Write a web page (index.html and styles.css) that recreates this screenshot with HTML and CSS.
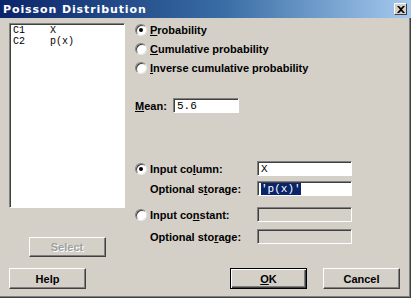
FILE: index.html
```html
<!DOCTYPE html>
<html lang="en">
<head>
	<meta charset="UTF-8">
	<title>Poisson Distribution</title>
	<link rel="stylesheet" href="styles.css">
</head>
<body>
	<div class="dialog">
		<div class="titlebar">
			<span class="title">Poisson Distribution</span>
			<span class="close">
				<svg width="8" height="7" viewBox="0 0 8 7"><path d="M0 0h2l2 2 2-2h2L5 3.5 8 7H6L4 5 2 7H0l3-3.5z" fill="#000"/></svg>
			</span>
		</div>
		<div class="content">
			<div class="left">
				<div class="list">
					<div class="list-row"><span>C1</span><span>X</span></div>
					<div class="list-row"><span>C2</span><span>p(x)</span></div>
				</div>
				<button class="btn btn-select" disabled>Select</button>
			</div>
			<div class="right">
				<div class="radio-row"><span class="radio on"></span><span class="label"><u>P</u>robability</span></div>
				<div class="radio-row"><span class="radio"></span><span class="label"><u>C</u>umulative probability</span></div>
				<div class="radio-row"><span class="radio"></span><span class="label"><u>I</u>nverse cumulative probability</span></div>

				<div class="field-row row-mean">
					<span class="label label-mean"><u>M</u>ean:</span>
					<span class="field field-mean">5.6</span>
				</div>

				<div class="field-row row-col">
					<span class="radio on"></span>
					<span class="label label-wide">Input co<u>l</u>umn:</span>
					<span class="field">X</span>
				</div>
				<div class="field-row row-store">
					<span class="label label-indent">Optional s<u>t</u>orage:</span>
					<span class="field"><span class="sel">'p(x)'</span></span>
				</div>
				<div class="field-row row-const">
					<span class="radio"></span>
					<span class="label label-wide">Input co<u>n</u>stant:</span>
					<span class="field off"></span>
				</div>
				<div class="field-row row-store2">
					<span class="label label-indent">Optional sto<u>r</u>age:</span>
					<span class="field off"></span>
				</div>
			</div>
		</div>
		<div class="footer">
			<button class="btn">Help</button>
			<button class="btn btn-default"><u>O</u>K</button>
			<button class="btn btn-cancel">Cancel</button>
		</div>
	</div>
</body>
</html>
```

FILE: styles.css
```css
*{
	margin: 0;
	padding: 0;
	box-sizing: border-box;
}
body{
	background: #d4d0c8;
	font-family: "Liberation Sans", Arial, sans-serif;
	font-size: 11px;
	color: #000;
}
u{
	text-decoration: underline;
	text-underline-offset: 1px;
}
.dialog{
	width: 411px;
	height: 298px;
	background: #d4d0c8;
	box-shadow: inset -1px -1px #404040, inset -2px -2px #808080;
}
.titlebar{
	display: flex;
	align-items: center;
	height: 18px;
	padding: 0 4px 0 3px;
	background: linear-gradient(to right, #0a246a, #3a6ea5 55%, #a6caf0);
	color: #fff;
	font-family: "DejaVu Sans", Verdana, sans-serif;
	font-weight: bold;
	font-size: 11px;
	letter-spacing: 0.9px;
}
.title{
	flex: 1;
}
.close{
	display: flex;
	align-items: center;
	justify-content: center;
	width: 13px;
	height: 12px;
	background: #d4d0c8;
	border: 1px solid;
	border-color: #fff #404040 #404040 #fff;
}
.content{
	display: flex;
	padding: 2px 0 0 9px;
}
.left{
	display: flex;
	flex-direction: column;
	align-items: center;
	width: 116px;
	padding-top: 3px;
}
.list{
	width: 116px;
	height: 185px;
	background: #fff;
	border: 1px solid;
	border-color: #808080 #fff #fff #808080;
	box-shadow: inset 1px 1px #404040;
	padding: 1px 0 0 3px;
	font-family: "Liberation Mono", "Courier New", monospace;
	font-size: 10px;
	line-height: 11px;
}
.list-row{
	display: flex;
}
.list-row span:first-child{
	width: 37px;
}
.btn{
	width: 77px;
	height: 21px;
	background: #d4d0c8;
	border: 1px solid;
	border-color: #fff #404040 #404040 #fff;
	box-shadow: inset -1px -1px #808080;
	font-family: "Liberation Sans", Arial, sans-serif;
	font-size: 11px;
	font-weight: bold;
	color: #000;
}
.btn-select{
	margin-top: 29px;
	height: 20px;
	color: #a0a0a0;
	text-shadow: 1px 1px #fff;
}
.btn-default{
	margin-left: auto;
	border-color: #000;
	box-shadow: inset 1px 1px #fff, inset -1px -1px #404040, inset -2px -2px #808080;
}
.btn-cancel{
	margin-left: 16px;
}
.right{
	margin-left: 10px;
}
.radio-row{
	display: flex;
	align-items: center;
	height: 19px;
}
.radio{
	position: relative;
	flex: none;
	width: 12px;
	height: 12px;
	border-radius: 50%;
	background: #fff;
	border: 1px solid;
	border-color: #808080 #e8e8e8 #e8e8e8 #808080;
	box-shadow: inset 1px 1px #404040;
	margin-right: 3px;
}
.radio.on::after{
	content: "";
	position: absolute;
	left: 3px;
	top: 3px;
	width: 4px;
	height: 4px;
	border-radius: 50%;
	background: #000;
}
.label{
	font-weight: bold;
	white-space: nowrap;
}
.field-row{
	display: flex;
	align-items: center;
	height: 15px;
}
.label-mean{
	width: 38px;
}
.label-wide{
	width: 107px;
}
.label-indent{
	width: 122px;
	padding-left: 15px;
}
.field{
	width: 95px;
	height: 15px;
	background: #fff;
	border: 1px solid;
	border-color: #808080 #fff #fff #808080;
	box-shadow: inset 1px 1px #404040;
	padding: 1px 0 0 3px;
	font-family: "Liberation Mono", "Courier New", monospace;
	font-size: 11px;
	line-height: 12px;
}
.field.off{
	background: #d4d0c8;
}
.field-mean{
	width: 66px;
}
.sel{
	background: #0a246a;
	color: #fff;
}
.row-mean{
	margin-top: 21px;
}
.row-col{
	margin-top: 48px;
}
.row-store{
	margin-top: 5px;
}
.row-const{
	margin-top: 11px;
}
.row-store2{
	margin-top: 7px;
}
.footer{
	display: flex;
	margin-top: 11px;
	padding: 0 11px 0 9px;
}
```
